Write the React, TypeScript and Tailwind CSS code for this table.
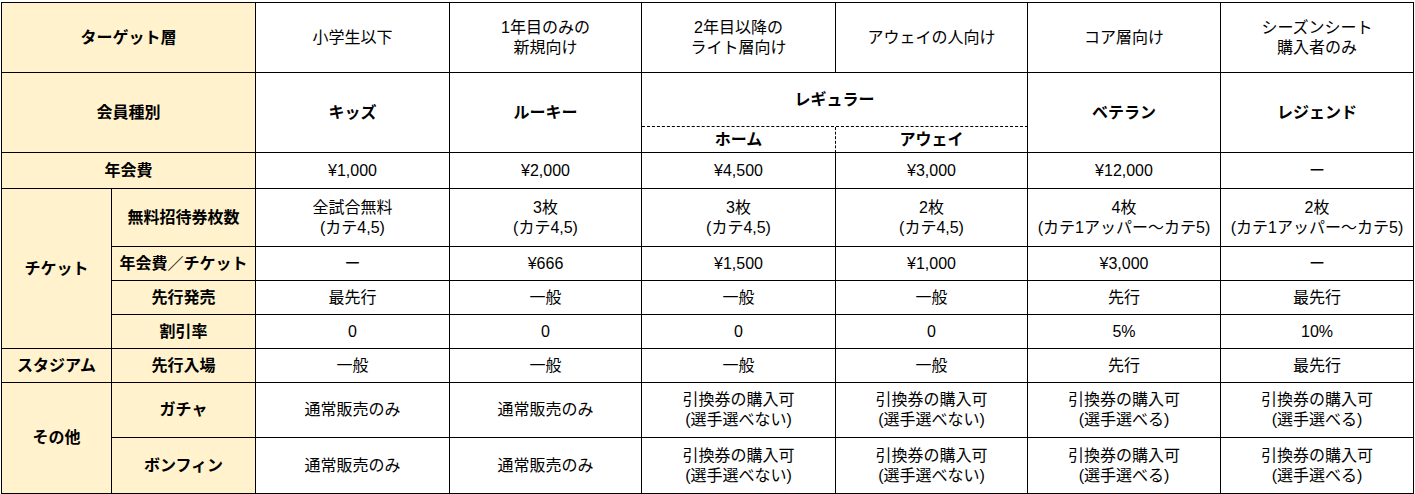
import React from "react";

const Y = "bg-[#fff2cc]";
const base =
  "flex items-center justify-center text-center border-r border-b border-black leading-[20px]";

function L({ children, cls = "" }: { children: React.ReactNode; cls?: string }) {
  return <div className={`${base} ${Y} font-bold ${cls}`}>{children}</div>;
}
function C({ children, cls = "" }: { children: React.ReactNode; cls?: string }) {
  return <div className={`${base} bg-white ${cls}`}>{children}</div>;
}
function Two({ a, b }: { a: string; b: string }) {
  return (
    <span>
      {a}
      <br />
      {b}
    </span>
  );
}

function Row({ vals }: { vals: React.ReactNode[] }) {
  return (
    <>
      {vals.map((v, i) => (
        <C key={i}>{v}</C>
      ))}
    </>
  );
}

export default function App() {
  return (
    <div className="w-[1415px] h-[494px] bg-white overflow-hidden">
      <div
        className="ml-px mt-[2px] w-[1413px] border-l border-t border-black grid grid-cols-[110px_144px_194px_192px_194px_192px_193px_193px] grid-rows-[70px_54px_26px_36px_58px_34px_34px_34px_34px_55px_56px] text-[16px] text-black"
        style={{ fontFamily: '"Liberation Sans", Arial, "Noto Sans CJK JP", sans-serif' }}
      >
        {/* row 1 */}
        <L cls="col-span-2">ターゲット層</L>
        <Row
          vals={[
            "小学生以下",
            <Two a="1年目のみの" b="新規向け" />,
            <Two a="2年目以降の" b="ライト層向け" />,
            "アウェイの人向け",
            "コア層向け",
            <Two a="シーズンシート" b="購入者のみ" />,
          ]}
        />
        {/* row 2-3 */}
        <L cls="col-span-2 row-span-2">会員種別</L>
        <C cls="row-span-2 font-bold">キッズ</C>
        <C cls="row-span-2 font-bold">ルーキー</C>
        <C cls="col-span-2 font-bold [border-bottom-style:dashed]">レギュラー</C>
        <C cls="row-span-2 font-bold">ベテラン</C>
        <C cls="row-span-2 font-bold">レジェンド</C>
        <C cls="font-bold [border-right-style:dashed]">ホーム</C>
        <C cls="font-bold">アウェイ</C>
        {/* row 4 */}
        <L cls="col-span-2">年会費</L>
        <Row vals={["¥1,000", "¥2,000", "¥4,500", "¥3,000", "¥12,000", "ー"]} />
        {/* tickets */}
        <L cls="row-span-4">チケット</L>
        <L>無料招待券枚数</L>
        <Row
          vals={[
            <Two a="全試合無料" b="(カテ4,5)" />,
            <Two a="3枚" b="(カテ4,5)" />,
            <Two a="3枚" b="(カテ4,5)" />,
            <Two a="2枚" b="(カテ4,5)" />,
            <Two a="4枚" b="(カテ1アッパー～カテ5)" />,
            <Two a="2枚" b="(カテ1アッパー～カテ5)" />,
          ]}
        />
        <L>年会費／チケット</L>
        <Row vals={["ー", "¥666", "¥1,500", "¥1,000", "¥3,000", "ー"]} />
        <L>先行発売</L>
        <Row vals={["最先行", "一般", "一般", "一般", "先行", "最先行"]} />
        <L>割引率</L>
        <Row vals={["0", "0", "0", "0", "5%", "10%"]} />
        {/* stadium */}
        <L>スタジアム</L>
        <L>先行入場</L>
        <Row vals={["一般", "一般", "一般", "一般", "先行", "最先行"]} />
        {/* other */}
        <L cls="row-span-2">その他</L>
        <L>ガチャ</L>
        <Row
          vals={[
            "通常販売のみ",
            "通常販売のみ",
            <Two a="引換券の購入可" b="(選手選べない)" />,
            <Two a="引換券の購入可" b="(選手選べない)" />,
            <Two a="引換券の購入可" b="(選手選べる)" />,
            <Two a="引換券の購入可" b="(選手選べる)" />,
          ]}
        />
        <L>ボンフィン</L>
        <Row
          vals={[
            "通常販売のみ",
            "通常販売のみ",
            <Two a="引換券の購入可" b="(選手選べない)" />,
            <Two a="引換券の購入可" b="(選手選べない)" />,
            <Two a="引換券の購入可" b="(選手選べる)" />,
            <Two a="引換券の購入可" b="(選手選べる)" />,
          ]}
        />
      </div>
    </div>
  );
}
